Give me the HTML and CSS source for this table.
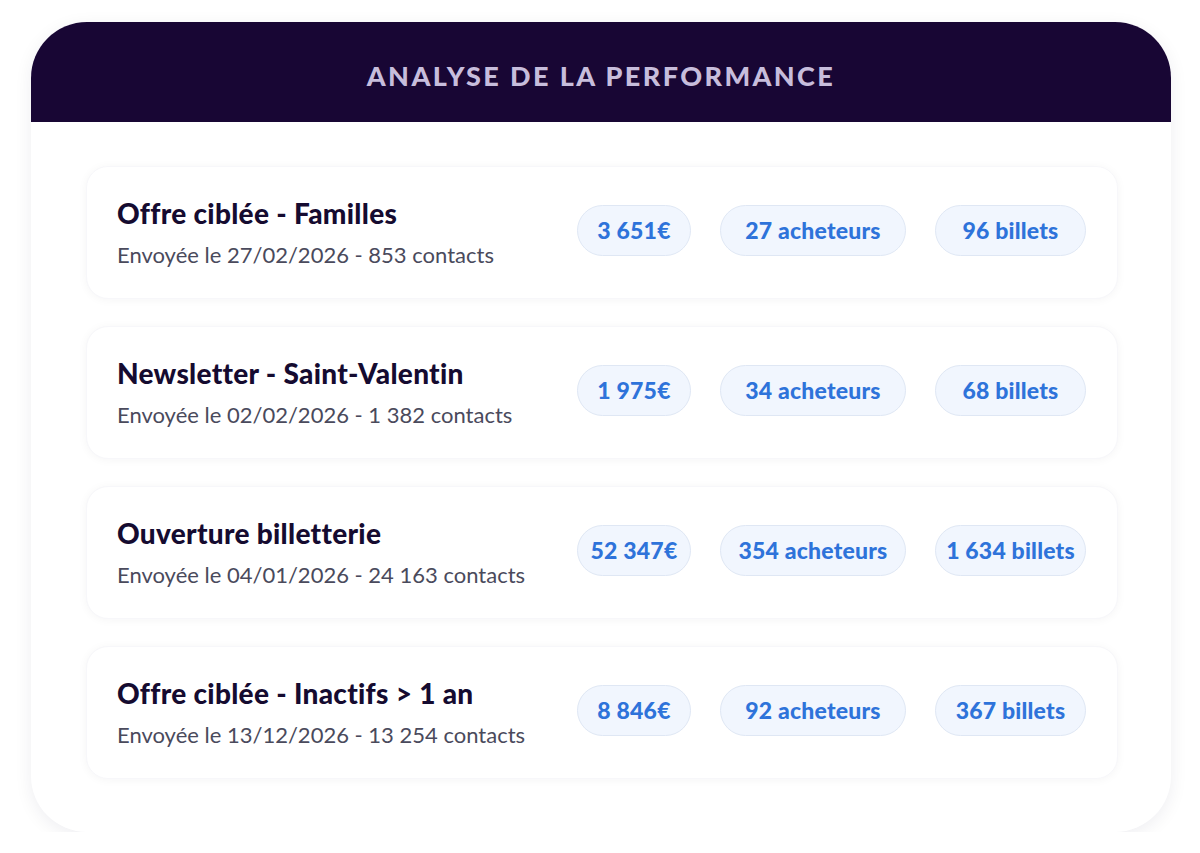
FILE: index.html
```html
<!DOCTYPE html>
<html lang="fr">
<head>
<meta charset="utf-8">
<title>Analyse de la performance</title>
<link rel="stylesheet" href="styles.css">
</head>
<body>
<div class="panel">
  <div class="panel-head">ANALYSE DE LA PERFORMANCE</div>
  <div class="panel-body">
    <div class="row">
      <div class="info">
        <div class="title">Offre ciblée - Familles</div>
        <div class="sub">Envoyée le 27/02/2026 - 853 contacts</div>
      </div>
      <div class="pills">
        <span class="pill p-rev">3 651€</span>
        <span class="pill p-buy">27 acheteurs</span>
        <span class="pill p-tix">96 billets</span>
      </div>
    </div>
    <div class="row">
      <div class="info">
        <div class="title">Newsletter - Saint-Valentin</div>
        <div class="sub">Envoyée le 02/02/2026 - 1 382 contacts</div>
      </div>
      <div class="pills">
        <span class="pill p-rev">1 975€</span>
        <span class="pill p-buy">34 acheteurs</span>
        <span class="pill p-tix">68 billets</span>
      </div>
    </div>
    <div class="row">
      <div class="info">
        <div class="title">Ouverture billetterie</div>
        <div class="sub">Envoyée le 04/01/2026 - 24 163 contacts</div>
      </div>
      <div class="pills">
        <span class="pill p-rev">52 347€</span>
        <span class="pill p-buy">354 acheteurs</span>
        <span class="pill p-tix">1 634 billets</span>
      </div>
    </div>
    <div class="row">
      <div class="info">
        <div class="title">Offre ciblée - Inactifs &gt; 1 an</div>
        <div class="sub">Envoyée le 13/12/2026 - 13 254 contacts</div>
      </div>
      <div class="pills">
        <span class="pill p-rev">8 846€</span>
        <span class="pill p-buy">92 acheteurs</span>
        <span class="pill p-tix">367 billets</span>
      </div>
    </div>
  </div>
</div>
</body>
</html>
```

FILE: styles.css
```css
* { box-sizing: border-box; }
html, body { margin: 0; padding: 0; background: #ffffff; }
body {
  font-family: Lato, "Liberation Sans", sans-serif;
  padding: 22px 29px 0 31px;
}
.panel {
  width: 1140px;
  height: 810px;
  border-radius: 56px;
  background: #ffffff;
  box-shadow: 0 4px 18px rgba(20, 10, 50, 0.07);
  overflow: hidden;
}
.panel-head {
  height: 100px;
  background: #180634;
  color: #c7bddc;
  font-weight: 900;
  font-size: 27px;
  letter-spacing: 2.4px;
  display: flex;
  align-items: center;
  justify-content: center;
  padding-top: 6px;
}
.panel-body {
  padding: 44px 53px 56px 55px;
  display: flex;
  flex-direction: column;
  gap: 27px;
}
.row {
  height: 133px;
  border-radius: 22px;
  background: #ffffff;
  box-shadow: 0 1px 10px rgba(20, 10, 50, 0.045);
  border: 1px solid #f7f7fa;
  display: flex;
  align-items: center;
  justify-content: space-between;
  padding: 0 31px 0 30px;
}
.info { display: flex; flex-direction: column; gap: 11px; }
.title {
  font-size: 28px;
  font-weight: 900;
  letter-spacing: 0.3px;
  color: #150b30;
  line-height: 34px;
}
.sub {
  font-size: 22px;
  color: #4a4a5c;
  line-height: 28px;
}
.pills { display: flex; gap: 29px; margin-bottom: 5px; }
.pill {
  height: 51px;
  border-radius: 26px;
  background: #f1f6fe;
  border: 1px solid #dfe7f4;
  color: #2e73da;
  font-weight: 900;
  font-size: 23px;
  letter-spacing: 0.2px;
  display: flex;
  align-items: center;
  justify-content: center;
}
.p-rev { width: 114px; }
.p-buy { width: 186px; }
.p-tix { width: 151px; }
```
